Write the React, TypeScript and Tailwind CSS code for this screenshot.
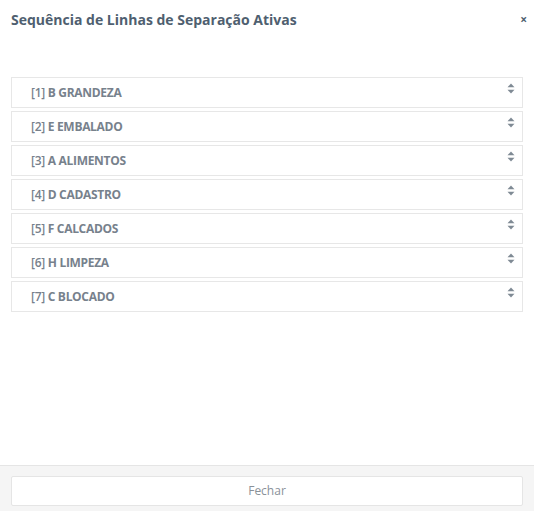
const lines = [
  { n: 1, name: 'B GRANDEZA' },
  { n: 2, name: 'E EMBALADO' },
  { n: 3, name: 'A ALIMENTOS' },
  { n: 4, name: 'D CADASTRO' },
  { n: 5, name: 'F CALCADOS' },
  { n: 6, name: 'H LIMPEZA' },
  { n: 7, name: 'C BLOCADO' },
]

function SortIcon() {
  return (
    <svg width="8" height="11" viewBox="0 0 8 11" className="text-[#7f8a94]">
      <path d="M4 0.5 L7.5 4.3 L0.5 4.3 Z" fill="currentColor" />
      <path d="M4 10.5 L7.5 6.7 L0.5 6.7 Z" fill="currentColor" />
    </svg>
  )
}

export default function App() {
  return (
    <div
      className="w-[534px] h-[511px] bg-white flex flex-col"
      style={{ fontFamily: '"Open Sans", sans-serif' }}
    >
      <div className="flex items-center justify-between h-[38px] pl-[11px] pr-[7px] pt-[1px]">
        <h4 className="text-[14px] font-bold text-[#4f5f70]">Sequência de Linhas de Separação Ativas</h4>
        <span className="text-[12px] font-bold text-[#4f5f70] leading-none">×</span>
      </div>

      <div className="flex-1 px-[11px] pt-[39px]">
        <ul className="flex flex-col gap-[3px]">
          {lines.map((l) => (
            <li
              key={l.n}
              className="h-[31px] border border-[#e7e7e7] flex items-start justify-between pl-[19px] pr-[7px]"
            >
              <span className="text-[12px] text-[#77818c] mt-[6px] font-bold tracking-[-0.3px]">
                <span className="font-semibold">[{l.n}]</span> {l.name}
              </span>
              <span className="mt-[5px]">
                <SortIcon />
              </span>
            </li>
          ))}
        </ul>
      </div>

      <div className="h-[46px] bg-[#f5f5f5] border-t border-[#e5e5e5] px-[11px] pt-[10px]">
        <button className="w-full h-[30px] bg-white border border-[#e5e5e5] rounded-[2px] text-[12px] text-[#8a9199]">
          Fechar
        </button>
      </div>
    </div>
  )
}
